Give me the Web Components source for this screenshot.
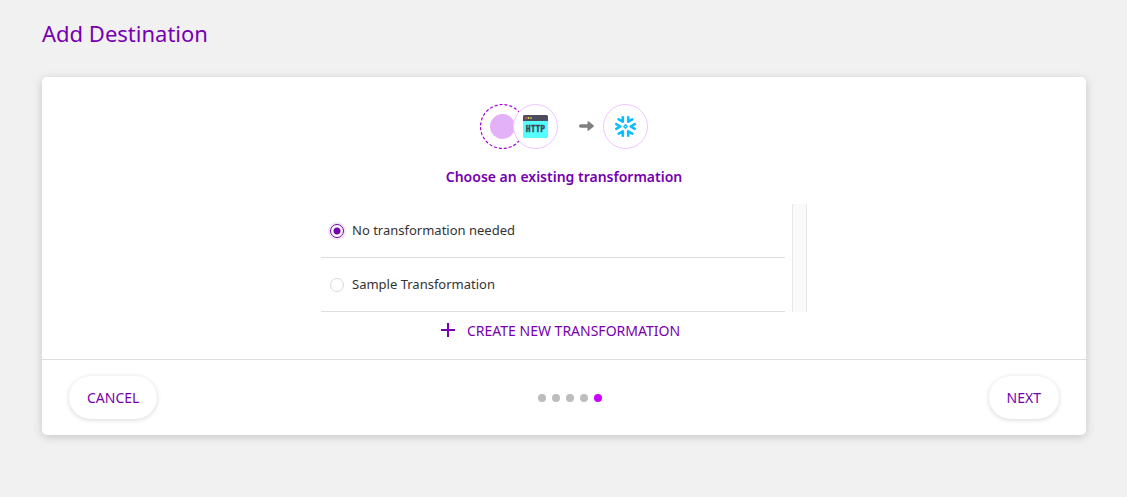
<!DOCTYPE html>
<html lang="en">
<head>
<meta charset="utf-8">
<title>Add Destination</title>
<style>
  body { margin: 0; background: #f1f1f1; color: #7600b0; font-family: "Noto Sans", sans-serif; font-size: 14px; line-height: 22px; }
</style>
</head>
<body>
<add-destination>
  <wizard-card>
    <connection-preview></connection-preview>
    <h2 slot="heading">Choose an existing transformation</h2>
    <option-list>
      <radio-option name="transformation" checked>No transformation needed</radio-option>
      <radio-option name="transformation">Sample Transformation</radio-option>
    </option-list>
    <create-button>CREATE NEW TRANSFORMATION</create-button>
    <pill-button slot="footer">CANCEL</pill-button>
    <step-dots slot="footer" steps="5" current="5"></step-dots>
    <pill-button slot="footer">NEXT</pill-button>
  </wizard-card>
</add-destination>

<script>
const define = (name, html, setup) => {
  const template = document.createElement('template');
  template.innerHTML = html;
  customElements.define(name, class extends HTMLElement {
    constructor() {
      super();
      this.attachShadow({ mode: 'open' }).append(template.content.cloneNode(true));
    }
    connectedCallback() { if (setup) setup(this, this.shadowRoot); }
  });
};

define('add-destination', `
  <style>
    :host { display: block; padding: 17px 41px 40px 42px; }
    h1 { margin: 0 0 28px; font-size: 22px; line-height: 32px; font-weight: 400; }
  </style>
  <h1>Add Destination</h1>
  <main><slot></slot></main>
`);

define('wizard-card', `
  <style>
    :host { display: block; background: #fff; border-radius: 5px; box-shadow: 0 2px 10px rgba(0, 0, 0, .18); }
    .body { display: flex; flex-direction: column; align-items: center; padding: 27px 27px 17px; }
    footer { display: flex; align-items: center; justify-content: space-between; padding: 16px 27px; border-top: 1px solid #dedede; }
    slot[name=heading] { order: 1; }
    ::slotted(h2) { order: 1; margin: 17px 0 16px; font-size: 14px; line-height: 22px; font-weight: 600; }
    ::slotted(option-list), ::slotted(create-button) { order: 2; }
  </style>
  <section class="body"><slot></slot><slot name="heading"></slot></section>
  <footer><slot name="footer"></slot></footer>
`);

define('connection-preview', `
  <style>
    :host { display: flex; align-items: center; }
    .node { box-sizing: border-box; width: 45px; height: 45px; display: grid; place-items: center; border: 1px solid #f0c8ff; border-radius: 50%; background: #fff; }
    .source { margin-left: -12px; position: relative; }
    .arrow { margin: 0 9px 0 21px; }
    svg { display: block; }
  </style>
  <svg width="45" height="45" viewBox="0 0 45 45" aria-hidden="true">
    <circle cx="22.5" cy="22.5" r="22" fill="#fff" stroke="#a900dc" stroke-width="1.2" stroke-dasharray="3 2"/>
    <circle cx="22.5" cy="22.5" r="12.5" fill="#e3b1f8"/>
  </svg>
  <div class="node source">
    <svg width="25" height="23" viewBox="0 0 25 23" role="img" aria-label="HTTP source">
      <path d="M0 6h25v15.5a1.5 1.5 0 0 1-1.5 1.5h-22A1.5 1.5 0 0 1 0 21.5z" fill="#5ff"/>
      <path d="M1.5 0h22A1.5 1.5 0 0 1 25 1.5V6H0V1.5A1.5 1.5 0 0 1 1.5 0z" fill="#4c4c5c"/>
      <circle cx="3" cy="3" r=".9" fill="#fb4a59"/>
      <circle cx="5.5" cy="3" r=".9" fill="#ffd940"/>
      <circle cx="8" cy="3" r=".9" fill="#8be36a"/>
      <text x="12.5" y="17" text-anchor="middle" font-family="DejaVu Sans Mono, monospace" font-weight="700" font-size="8" fill="#3f4655" stroke="#3f4655" stroke-width=".4">HTTP</text>
    </svg>
  </div>
  <svg class="arrow" width="15" height="12" viewBox="0 0 15 12" aria-hidden="true">
    <path d="M1.8 3.2H8.5V1Q8.6-.4 9.9 .5L14.5 4.2Q15.3 5 14.5 5.8L9.9 9.5Q8.6 10.4 8.5 9V6.8H1.8Q0 6.8 0 5T1.8 3.2z" fill="#808080"/>
  </svg>
  <div class="node">
    <svg width="21" height="21" viewBox="-10.5 -10.5 21 21" role="img" aria-label="Snowflake destination" fill="none" stroke="#0bbcff" stroke-width="2.6" stroke-linecap="round" stroke-linejoin="round">
      <path d="M-2.7-9.200V-4.800L-6.800-7.100M2.700-9.200V-4.800L6.800-7.100M-2.700 9.200V4.800L-6.800 7.100M2.700 9.200V4.800L6.800 7.100M-9.200-2.400L-5.200 0L-9.200 2.400M9.200-2.400L5.200 0L9.200 2.400"/>
      <path d="M0-1.700L1.700 0L0 1.700L-1.700 0z" stroke-width="1.4"/>
    </svg>
  </div>
`);

define('option-list', `
  <style>
    :host { display: flex; gap: 7px; width: 100%; max-width: 486px; }
    .rows { flex: 1; }
    .track { box-sizing: border-box; width: 15px; background: #fafafa; border: solid #e8e8e8; border-width: 0 1px; }
  </style>
  <div class="rows" role="radiogroup" aria-label="Existing transformations"><slot></slot></div>
  <div class="track"></div>
`);

define('radio-option', `
  <style>
    :host { display: block; border-bottom: 1px solid #dedede; color: #333; font-size: 13px; line-height: 20px; }
    label { display: flex; align-items: center; gap: 8px; padding: 16px 8px 17px; }
    input { appearance: none; box-sizing: border-box; width: 14px; height: 14px; margin: 2px 0 0 1px; border: 1px solid #d9d9d9; border-radius: 50%; background: #fff; }
    input:checked { border-color: #7600b0; background: radial-gradient(circle, #7600b0 3px, #fff 4px); box-shadow: 0 0 0 2px #f1e5f6; }
  </style>
  <label><input type="radio"><slot></slot></label>
`, (host, root) => {
  const input = root.querySelector('input');
  input.name = host.getAttribute('name');
  input.checked = host.hasAttribute('checked');
  input.addEventListener('change', () => {
    for (const other of host.parentElement.querySelectorAll('radio-option'))
      if (other !== host) other.shadowRoot.querySelector('input').checked = false;
  });
});

define('create-button', `
  <style>
    :host { display: block; margin-top: 8px; }
    button { display: flex; align-items: center; gap: 12px; min-width: 246px; padding: 0; border: 0; background: none; color: inherit; font: inherit; cursor: pointer; }
    svg { display: block; margin-bottom: 2px; }
  </style>
  <button type="button"><svg width="14" height="14" viewBox="0 0 14 14" aria-hidden="true"><path d="M7 0v14M0 7h14" stroke="#7600b0" stroke-width="2"/></svg><slot></slot></button>
`);

define('pill-button', `
  <style>
    :host { display: block; }
    button { display: block; height: 43px; padding: 0 18px; border: 0; border-radius: 22px; background: #fff; color: inherit; font: inherit; box-shadow: 0 1px 5px rgba(0, 0, 0, .16); cursor: pointer; }
  </style>
  <button type="button"><slot></slot></button>
`);

define('step-dots', `
  <style>
    :host { display: flex; }
    i { width: 8px; height: 8px; margin-right: 6px; border-radius: 50%; background: #bdbdbd; }
    i.current { background: #c0f; }
  </style>
`, (host, root) => {
  const current = Number(host.getAttribute('current'));
  for (let n = 1; n <= Number(host.getAttribute('steps')); n++) {
    const dot = document.createElement('i');
    if (n === current) dot.className = 'current';
    root.append(dot);
  }
});
</script>
</body>
</html>
